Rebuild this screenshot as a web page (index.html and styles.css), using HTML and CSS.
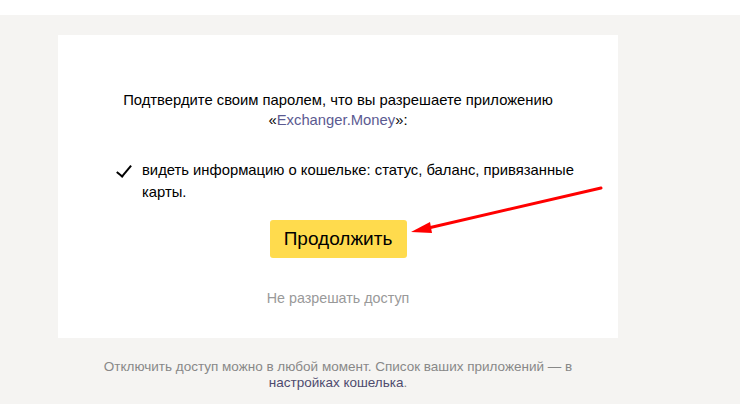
FILE: index.html
```html
<!DOCTYPE html>
<html lang="ru">

<head>
    <meta charset="UTF-8">
    <meta name="viewport" content="width=device-width, initial-scale=1.0">
    <link rel="stylesheet" href="styles.css">
    <title>Доступ к кошельку</title>
</head>

<body>
    <div class="topbar"></div>

    <main class="page">
        <section class="card">
            <p class="lead">Подтвердите своим паролем, что вы разрешаете приложению
                «<a href="#" class="app-link">Exchanger.Money</a>»:</p>

            <ul class="perms">
                <li>видеть информацию о кошельке: статус, баланс, привязанные карты.</li>
            </ul>

            <button type="submit" class="btn-go">Продолжить</button>

            <a href="#" class="deny">Не разрешать доступ</a>
        </section>

        <p class="note">Отключить доступ можно в любой момент. Список ваших приложений — в
            <a href="#">настройках кошелька</a>.</p>
    </main>

    <!-- pointer drawn over the page -->
    <svg class="pointer" width="740" height="404" viewBox="0 0 740 404">
        <line x1="601" y1="188" x2="424" y2="229" stroke="#ff0000" stroke-width="3" stroke-linecap="round" />
        <polygon points="411,232 430,222 432,233" fill="#ff0000" />
    </svg>
</body>

</html>
```

FILE: styles.css
```css
* {
    margin: 0;
    padding: 0;
    box-sizing: border-box;
}

body {
    background: #f5f4f2;
    font-family: "Liberation Sans", Arial, sans-serif;
    color: #000;
    position: relative;
    height: 404px;
    overflow: hidden;
}

a {
    text-decoration: none;
}

.topbar {
    height: 15px;
    background: #fff;
}

.page {
    padding: 20px 0 0 58px;
}

.card {
    width: 560px;
    height: 303px;
    background: #fff;
    padding: 55px 50px 0;
    display: flex;
    flex-direction: column;
    align-items: center;
}

.lead {
    width: 450px;
    font-size: 14.8px;
    line-height: 20px;
    text-align: center;
}

.app-link {
    color: #5b5a91;
}

.perms {
    list-style: none;
    align-self: stretch;
    margin: 29px -10px 0 9px;
}

.perms li {
    position: relative;
    padding-left: 25px;
    font-size: 14.8px;
    line-height: 22px;
}

.perms li::before {
    content: "";
    position: absolute;
    left: 3px;
    top: 3px;
    width: 6px;
    height: 13px;
    border-right: 2px solid #000;
    border-bottom: 2px solid #000;
    transform: rotate(40deg);
}

.btn-go {
    margin-top: 17px;
    width: 137px;
    height: 38px;
    border: none;
    border-radius: 3px;
    background: #ffdb4d;
    font-family: inherit;
    font-size: 19px;
    color: #000;
    cursor: pointer;
}

.deny {
    margin-top: 32px;
    font-size: 14.3px;
    color: #999;
}

.note {
    width: 480px;
    margin: 21px 0 0 40px;
    font-size: 13.5px;
    line-height: 16px;
    text-align: center;
    color: #888;
}

.note a {
    color: #4e4b6e;
}

.pointer {
    position: absolute;
    top: 0;
    left: 0;
    pointer-events: none;
}
```
